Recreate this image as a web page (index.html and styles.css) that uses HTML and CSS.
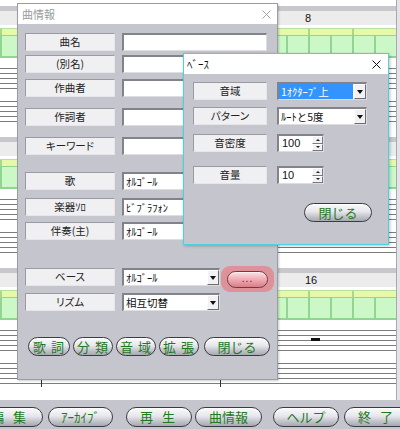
FILE: index.html
```html
<!DOCTYPE html>
<html lang="ja">
<head>
<meta charset="utf-8">
<title>曲情報</title>
<link rel="stylesheet" href="styles.css">
</head>
<body>
<div class="app">
  <div class="score-wrap">
    <div class="score">
      <div class="score-top"></div>
      <div class="system">
        <div class="sys-sep"></div>
        <div class="sys-bar"><span class="mno">8</span></div>
        <div class="sys-gap"></div>
        <div class="chord-lane"></div>
        <div class="beat-lane"></div>
        <div class="staff staff-a"></div>
        <div class="staff staff-b"></div>
      </div>
      <div class="system">
        <div class="sys-sep"></div>
        <div class="sys-bar"><span class="mno">12</span></div>
        <div class="sys-gap"></div>
        <div class="chord-lane"></div>
        <div class="beat-lane"></div>
        <div class="staff staff-a"></div>
        <div class="staff staff-b"></div>
      </div>
      <div class="system">
        <div class="sys-sep"></div>
        <div class="sys-bar"><span class="mno">16</span></div>
        <div class="sys-gap"></div>
        <div class="chord-lane"></div>
        <div class="beat-lane"></div>
        <div class="staff staff-a"><span class="rest"></span></div>
        <div class="staff staff-b"><span class="tick tick-1"></span><span class="tick tick-2"></span></div>
      </div>
    </div>
    <div class="vscroll"></div>
  </div>

  <div class="toolbar">
    <div class="tb-btn tb-edit">編 集</div>
    <div class="tb-btn tb-archive">ｱｰｶｲﾌﾞ</div>
    <div class="tb-btn tb-play">再 生</div>
    <div class="tb-btn tb-info">曲情報</div>
    <div class="tb-btn tb-help">ヘルプ</div>
    <div class="tb-btn tb-quit">終 了</div>
  </div>

  <div class="dlg dlg-info">
    <div class="dlg-title">
      <span class="dlg-name dim">曲情報</span>
      <svg class="dlg-x" width="9" height="9" viewBox="0 0 9 9"><path d="M0.5 0.5L8.5 8.5M8.5 0.5L0.5 8.5" stroke="#a4a4a8" stroke-width="1"/></svg>
    </div>
    <div class="info-body">
      <div class="frow"><div class="flabel">曲名</div><div class="field wide"></div></div>
      <div class="frow gap-4"><div class="flabel">(別名)</div><div class="field wide"></div></div>
      <div class="frow gap-6"><div class="flabel">作曲者</div><div class="field wide"></div></div>
      <div class="frow gap-11"><div class="flabel">作詞者</div><div class="field wide"></div></div>
      <div class="frow gap-11"><div class="flabel">キーワード</div><div class="field wide"></div></div>
      <div class="frow gap-17"><div class="flabel">歌</div><div class="field combo"><span class="ctext">ｵﾙｺﾞｰﾙ</span><span class="cbtn"><i class="tri-down"></i></span></div></div>
      <div class="frow gap-8"><div class="flabel">楽器ｿﾛ</div><div class="field combo"><span class="ctext">ﾋﾞﾌﾞﾗﾌｫﾝ</span><span class="cbtn"><i class="tri-down"></i></span></div></div>
      <div class="frow gap-6"><div class="flabel">伴奏(主)</div><div class="field combo"><span class="ctext">ｵﾙｺﾞｰﾙ</span><span class="cbtn"><i class="tri-down"></i></span></div></div>
      <div class="frow gap-28"><div class="flabel">ベース</div><div class="field combo"><span class="ctext">ｵﾙｺﾞｰﾙ</span><span class="cbtn"><i class="tri-down"></i></span></div>
        <div class="more-halo"><div class="more-btn">...</div></div>
      </div>
      <div class="frow gap-7"><div class="flabel">リズム</div><div class="field combo"><span class="ctext">相互切替</span><span class="cbtn"><i class="tri-down"></i></span></div></div>
      <div class="btn-row gap-26">
        <div class="pill w42">歌 詞</div>
        <div class="pill w40">分 類</div>
        <div class="pill w40">音 域</div>
        <div class="pill w40">拡 張</div>
        <div class="pill w66 close">閉じる</div>
      </div>
    </div>
  </div>

  <div class="dlg dlg-bass">
    <div class="dlg-title bass-title">
      <span class="dlg-name">ﾍﾞｰｽ</span>
      <svg class="dlg-x" width="9" height="9" viewBox="0 0 9 9"><path d="M0.5 0.5L8.5 8.5M8.5 0.5L0.5 8.5" stroke="#111" stroke-width="1"/></svg>
    </div>
    <div class="bass-body">
      <div class="frow"><div class="flabel blabel">音域</div><div class="field bcombo"><span class="ctext sel">1ｵｸﾀｰﾌﾞ上</span><span class="cbtn"><i class="tri-down"></i></span></div></div>
      <div class="frow gap-7"><div class="flabel blabel">パターン</div><div class="field bcombo"><span class="ctext">ﾙｰﾄと5度</span><span class="cbtn"><i class="tri-down"></i></span></div></div>
      <div class="frow gap-9"><div class="flabel blabel">音密度</div><div class="field spin"><span class="ctext num">100</span><span class="spin-btns"><span class="sbtn"><i class="tri-up-s"></i></span><span class="sbtn"><i class="tri-down-s"></i></span></span></div></div>
      <div class="frow gap-14"><div class="flabel blabel">音量</div><div class="field spin"><span class="ctext num">10</span><span class="spin-btns"><span class="sbtn"><i class="tri-up-s"></i></span><span class="sbtn"><i class="tri-down-s"></i></span></span></div></div>
      <div class="pill bass-close">閉じる</div>
    </div>
  </div>
</div>
</body>
</html>
```

FILE: styles.css
```css
* { box-sizing: border-box; }
html, body { margin: 0; padding: 0; }
body {
  width: 400px;
  height: 429px;
  overflow: hidden;
  background: #c5c5cd;
  font-family: "Noto Sans CJK JP", "Liberation Sans", sans-serif;
  color: #1c1c1c;
}
.app { position: relative; width: 400px; height: 429px; overflow: hidden; }

/* ---------- score background ---------- */
.score-wrap { display: flex; height: 400px; background: #fff; }
.score { width: 396px; overflow: hidden; }
.vscroll { width: 4px; background: #e4e4e8; border-left: 1px solid #a8a8b0; }
.score-top { height: 6px; }
.system { height: 131px; }
.sys-sep { height: 5px; background: #c8c8cc; }
.sys-bar {
  height: 14px;
  background: #ececec;
  font: 11px/14px "Liberation Sans", sans-serif;
  color: #111;
  padding-left: 305px;
}
.sys-gap { height: 3px; }
.chord-lane {
  height: 7px;
  background-color: #e6f8aa;
  background-image: repeating-linear-gradient(90deg, #a8d890 0 2px, transparent 2px 44px);
  border-top: 1px solid #b8e09c;
}
.beat-lane {
  height: 23px;
  background-color: #ccf8c8;
  background-image: repeating-linear-gradient(90deg, #92d492 0 2px, transparent 2px 22px);
  border-top: 1px solid #92d492;
  border-bottom: 2px solid #92d492;
}
.staff {
  position: relative;
  height: 21px;
  background-image: repeating-linear-gradient(180deg, #7c7c7c 0 1px, transparent 1px 5px);
}
.staff-a { margin-top: 10px; }
.staff-b { margin-top: 12px; }
.rest { position: absolute; left: 311px; top: 8px; width: 9px; height: 3px; background: #111; }
.tick { position: absolute; top: 16px; width: 1px; height: 8px; background: #333; }
.tick-1 { left: 41px; }
.tick-2 { left: 220px; }

/* ---------- bottom toolbar ---------- */
.toolbar { height: 29px; display: flex; align-items: flex-start; padding-top: 7px; }
.tb-btn {
  flex: none;
  width: 66px;
  height: 20px;
  border: 1px solid #3a3a42;
  border-radius: 10px;
  background: linear-gradient(#fbfbfd 0%, #e6e6ec 45%, #c2c2ca 75%, #a8a8b2 100%);
  box-shadow: inset 0 1px 0 #fff;
  color: #1d7a1d;
  font-size: 13px;
  line-height: 18px;
  text-align: center;
  letter-spacing: 3px;
}
.tb-edit { margin-left: -23px; }
.tb-archive { margin-left: 5px; width: 65px; letter-spacing: 0; }
.tb-play { margin-left: 13px; }
.tb-info { margin-left: 3px; width: 67px; letter-spacing: 0; }
.tb-help { margin-left: 11px; letter-spacing: 0; }
.tb-quit { margin-left: 5px; }

/* ---------- dialogs ---------- */
.dlg { position: absolute; background: #c5c5cd; display: flex; flex-direction: column; }
.dlg-info {
  left: 17px; top: 3px; width: 261px; height: 377px;
  border: 1px solid #9c9ca4;
  box-shadow: 1px 1px 2px rgba(0,0,0,0.2);
}
.dlg-bass {
  left: 183px; top: 53px; width: 206px; height: 192px;
  border: 1px solid #4cd2dc;
  box-shadow: 1px 1px 3px rgba(0,0,0,0.25);
}
.dlg-title {
  flex: none;
  height: 20px;
  background: #fff;
  display: flex;
  align-items: center;
  justify-content: space-between;
  padding: 0 6px 0 4px;
}
.bass-title { padding: 0 7px 0 3px; }
.dlg-name { font-size: 11px; color: #111; }
.dlg-name.dim { color: #9a9a9e; }
.dlg-x { display: block; }

.info-body { display: flex; flex-direction: column; padding: 9px 0 0 7px; }
.bass-body { display: flex; flex-direction: column; padding: 8px 0 0 9px; }

.frow { display: flex; align-items: flex-start; height: 18px; }
.gap-4 { margin-top: 4px; }
.gap-6 { margin-top: 6px; }
.gap-7 { margin-top: 7px; }
.gap-8 { margin-top: 8px; }
.gap-9 { margin-top: 9px; }
.gap-11 { margin-top: 11px; }
.gap-14 { margin-top: 14px; }
.gap-17 { margin-top: 17px; }
.gap-26 { margin-top: 26px; }
.gap-28 { margin-top: 28px; }

.flabel {
  flex: none;
  width: 90px;
  height: 18px;
  background: #f0f0f2;
  border-top: 1px solid #9a9aa2;
  border-left: 1px solid #9a9aa2;
  border-right: 1px solid #e6e6ea;
  border-bottom: 1px solid #e6e6ea;
  font-size: 10.5px;
  line-height: 16px;
  text-align: center;
  color: #222;
  font-feature-settings: "palt";
}
.blabel { width: 74px; }

.field {
  flex: none;
  height: 18px;
  margin-left: 7px;
  background: #fff;
  border-top: 2px solid #82828a;
  border-left: 2px solid #82828a;
  border-right: 1px solid #dedee2;
  border-bottom: 1px solid #dedee2;
  display: flex;
  align-items: stretch;
}
.wide { width: 145px; }
.combo { width: 98px; }
.bcombo { width: 90px; margin-left: 10px; }
.spin { width: 47px; margin-left: 10px; }

.ctext {
  flex: 1;
  font-size: 10.5px;
  line-height: 15px;
  padding-left: 2px;
  color: #111;
  white-space: nowrap;
  overflow: hidden;
}
.ctext.sel { background: #3393ff; color: #fff; margin-right: 1px; }
.ctext.num { font-family: "Liberation Sans", sans-serif; font-size: 11px; padding-left: 3px; }

.cbtn {
  flex: none;
  width: 12px;
  background: #f2f2f4;
  border-style: solid;
  border-width: 1px;
  border-color: #fff #6c6c72 #6c6c72 #fff;
  display: flex;
  align-items: center;
  justify-content: center;
}
.tri-down {
  display: block;
  width: 0; height: 0;
  border-left: 3px solid transparent;
  border-right: 3px solid transparent;
  border-top: 4px solid #111;
}
.spin-btns { flex: none; width: 11px; display: flex; flex-direction: column; }
.sbtn {
  flex: 1;
  background: #f2f2f4;
  border-style: solid;
  border-width: 1px;
  border-color: #fff #7a7a80 #7a7a80 #fff;
  display: flex;
  align-items: center;
  justify-content: center;
}
.tri-up-s { display: block; width: 0; height: 0; border-left: 2px solid transparent; border-right: 2px solid transparent; border-bottom: 2px solid #222; }
.tri-down-s { display: block; width: 0; height: 0; border-left: 2px solid transparent; border-right: 2px solid transparent; border-top: 2px solid #222; }

/* pink "..." button with highlight halo */
.more-halo {
  flex: none;
  margin: -2px 0 0 1px;
  width: 53px;
  height: 26px;
  padding: 5px 6px 4px;
  border-radius: 9px;
  background: #df9199;
}
.more-btn {
  height: 17px;
  border: 1px solid #6a3c44;
  border-radius: 9px;
  background: linear-gradient(#fde0e3 0%, #f2b0b6 45%, #d97e88 100%);
  box-shadow: inset 0 1px 0 #fff0f2;
  font: 10px/13px "Liberation Sans", sans-serif;
  color: #3a2a2c;
  text-align: center;
  letter-spacing: 1px;
}

/* pill buttons */
.btn-row { display: flex; gap: 3px; padding-left: 3px; }
.pill {
  flex: none;
  height: 19px;
  border: 1px solid #3a3a42;
  border-radius: 10px;
  background: linear-gradient(#fbfbfd 0%, #e6e6ec 45%, #c2c2ca 75%, #a8a8b2 100%);
  box-shadow: inset 0 1px 0 #fff;
  color: #1d7a1d;
  font-size: 13px;
  line-height: 17px;
  text-align: center;
}
.w42 { width: 42px; letter-spacing: 1px; }
.w40 { width: 40px; letter-spacing: 1px; }
.w66 { width: 66px; }
.close { margin-left: 2px; }
.bass-close { width: 68px; margin-top: 19px; align-self: flex-end; margin-right: 16px; }
```
